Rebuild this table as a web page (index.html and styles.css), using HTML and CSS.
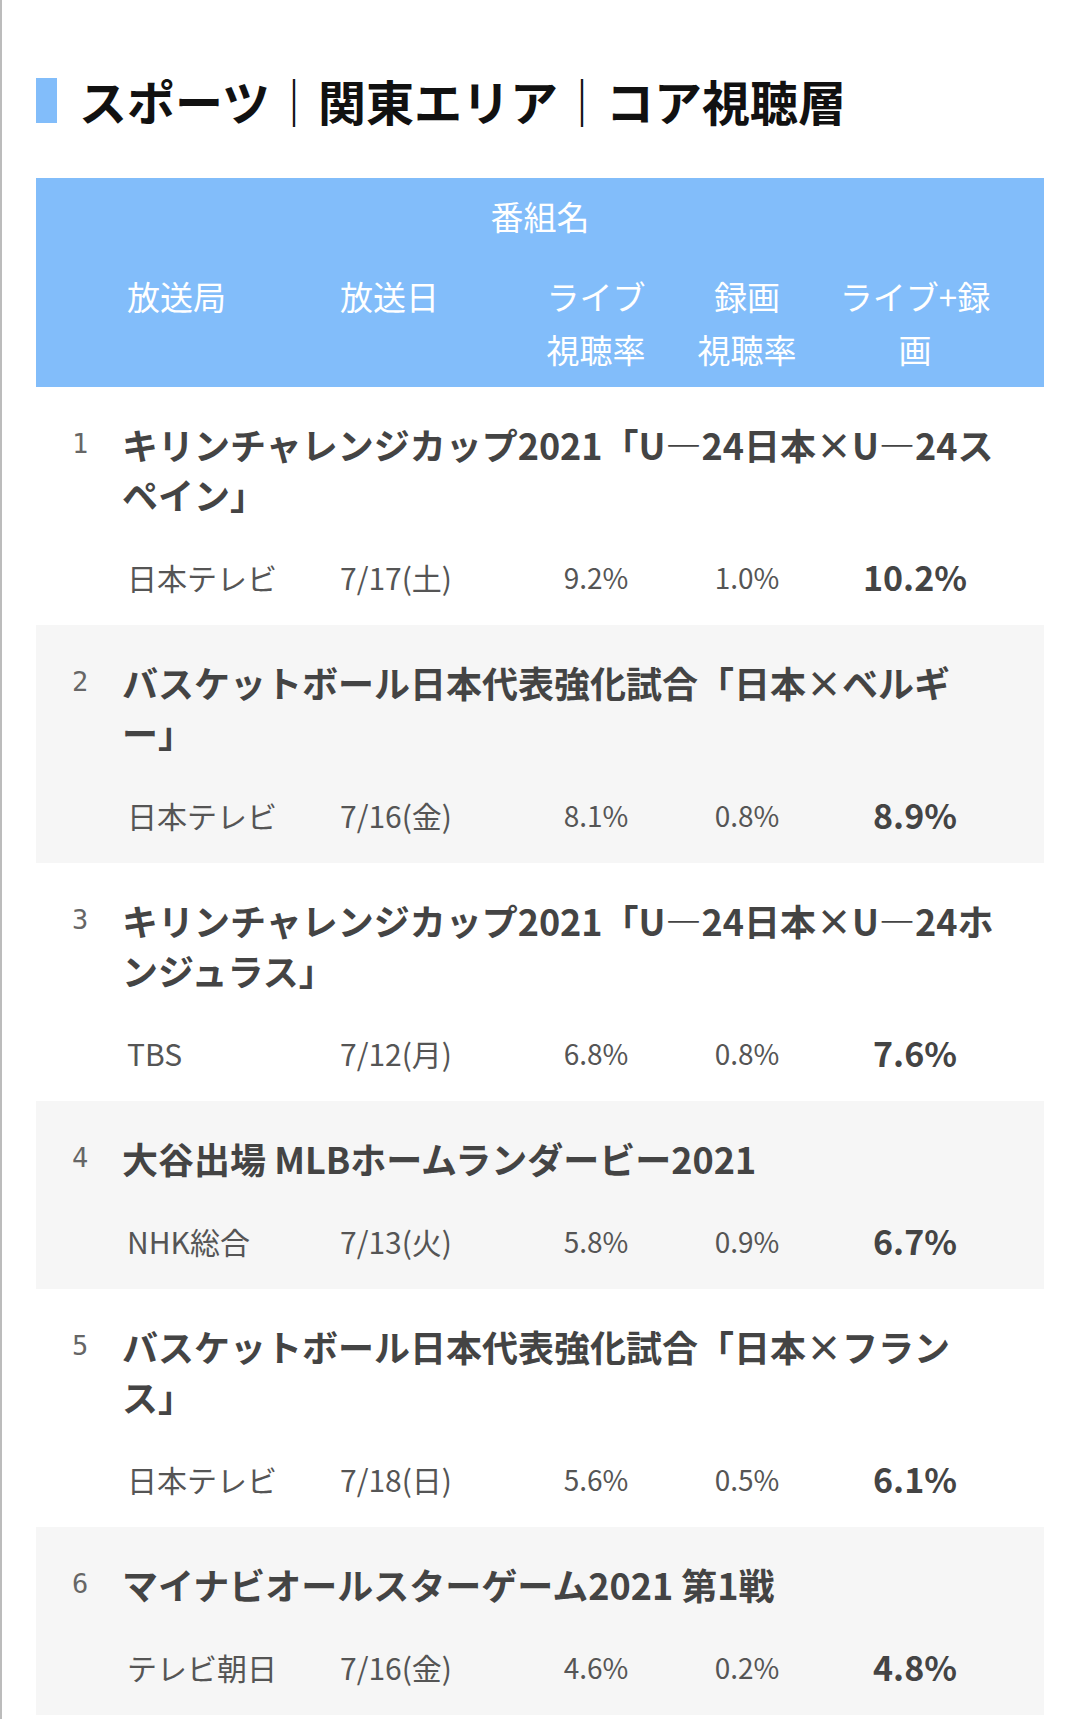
FILE: index.html
```html
<!DOCTYPE html>
<html lang="ja">
<head>
<meta charset="utf-8">
<title>スポーツ｜関東エリア｜コア視聴層</title>
<link rel="stylesheet" href="styles.css">
</head>
<body>
<div class="page">
  <h1 class="page-title"><span class="title-bar"></span><span>スポーツ｜関東エリア｜コア視聴層</span></h1>

  <div class="ranking">
    <div class="head">
      <div class="head-name">番組名</div>
      <div class="grid head-cols">
        <div class="c-station">放送局</div>
        <div class="c-date">放送日</div>
        <div class="c-live">ライブ<br>視聴率</div>
        <div class="c-rec">録画<br>視聴率</div>
        <div class="c-total c-total-head">ライブ+録<br>画</div>
      </div>
    </div>

    <div class="row">
      <div class="row-top"><span class="rank">1</span><span class="prog">キリンチャレンジカップ2021「U―24日本×U―24スペイン」</span></div>
      <div class="grid meta"><div class="c-station">日本テレビ</div><div class="c-date">7/17(土)</div><div class="c-live rate">9.2%</div><div class="c-rec rate">1.0%</div><div class="c-total total">10.2%</div></div>
    </div>

    <div class="row alt">
      <div class="row-top"><span class="rank">2</span><span class="prog">バスケットボール日本代表強化試合「日本×ベルギー」</span></div>
      <div class="grid meta"><div class="c-station">日本テレビ</div><div class="c-date">7/16(金)</div><div class="c-live rate">8.1%</div><div class="c-rec rate">0.8%</div><div class="c-total total">8.9%</div></div>
    </div>

    <div class="row">
      <div class="row-top"><span class="rank">3</span><span class="prog">キリンチャレンジカップ2021「U―24日本×U―24ホンジュラス」</span></div>
      <div class="grid meta"><div class="c-station">TBS</div><div class="c-date">7/12(月)</div><div class="c-live rate">6.8%</div><div class="c-rec rate">0.8%</div><div class="c-total total">7.6%</div></div>
    </div>

    <div class="row alt">
      <div class="row-top"><span class="rank">4</span><span class="prog">大谷出場 MLBホームランダービー2021</span></div>
      <div class="grid meta"><div class="c-station">NHK総合</div><div class="c-date">7/13(火)</div><div class="c-live rate">5.8%</div><div class="c-rec rate">0.9%</div><div class="c-total total">6.7%</div></div>
    </div>

    <div class="row">
      <div class="row-top"><span class="rank">5</span><span class="prog">バスケットボール日本代表強化試合「日本×フランス」</span></div>
      <div class="grid meta"><div class="c-station">日本テレビ</div><div class="c-date">7/18(日)</div><div class="c-live rate">5.6%</div><div class="c-rec rate">0.5%</div><div class="c-total total">6.1%</div></div>
    </div>

    <div class="row alt">
      <div class="row-top"><span class="rank">6</span><span class="prog">マイナビオールスターゲーム2021 第1戦</span></div>
      <div class="grid meta"><div class="c-station">テレビ朝日</div><div class="c-date">7/16(金)</div><div class="c-live rate">4.6%</div><div class="c-rec rate">0.2%</div><div class="c-total total">4.8%</div></div>
    </div>
  </div>
</div>
</body>
</html>
```
FILE: styles.css
```css
html, body {
  margin: 0;
  padding: 0;
  background: #ffffff;
}
body {
  font-family: "Noto Sans CJK JP", "Noto Sans", sans-serif;
  color: #444;
}
.page {
  border-left: 2px solid #bcbcbc;
  padding: 70px 36px 0 34px;
  min-height: 1649px;
}
.page-title {
  display: flex;
  align-items: center;
  gap: 22px;
  margin: 0;
  font-size: 48px;
  line-height: 60px;
  font-weight: 700;
  color: #111;
}
.title-bar {
  display: block;
  width: 21px;
  height: 45px;
  background: #82bdfa;
}
.ranking {
  margin-top: 48px;
}
.head {
  background: #82bdfa;
  color: #fff;
  height: 209px;
  overflow: hidden;
  padding-top: 14px;
  box-sizing: border-box;
  font-size: 33px;
}
.head-name {
  text-align: center;
  line-height: 48px;
}
.grid {
  display: grid;
  grid-template-columns: 91px 213px 180px 152px 150px 186px 36px;
}
.head-cols {
  margin-top: 30px;
  line-height: 53px;
}
.c-station { grid-column: 2; }
.c-date { grid-column: 3; }
.c-live { grid-column: 4; text-align: center; }
.c-rec { grid-column: 5; text-align: center; }
.c-total { grid-column: 6; text-align: center; }
.c-total-head { padding: 0 13px; }
.row {
  padding: 32px 0 23px;
}
.row.alt {
  background: #f6f6f6;
}
.row-top {
  display: grid;
  grid-template-columns: 86px 1fr;
  padding-right: 36px;
}
.rank {
  padding-left: 36px;
  font-family: "DejaVu Sans Mono", "Liberation Mono", monospace;
  font-size: 27px;
  line-height: 50px;
  color: #666;
}
.prog {
  font-size: 36px;
  line-height: 50px;
  font-weight: 700;
  color: #444;
  text-spacing-trim: space-all;
}
.meta {
  margin-top: 33px;
  align-items: center;
  font-size: 30px;
  line-height: 50px;
  color: #555;
}
.rate {
  font-size: 28px;
}
.total {
  font-size: 34px;
  font-weight: 700;
  color: #444;
}
```
